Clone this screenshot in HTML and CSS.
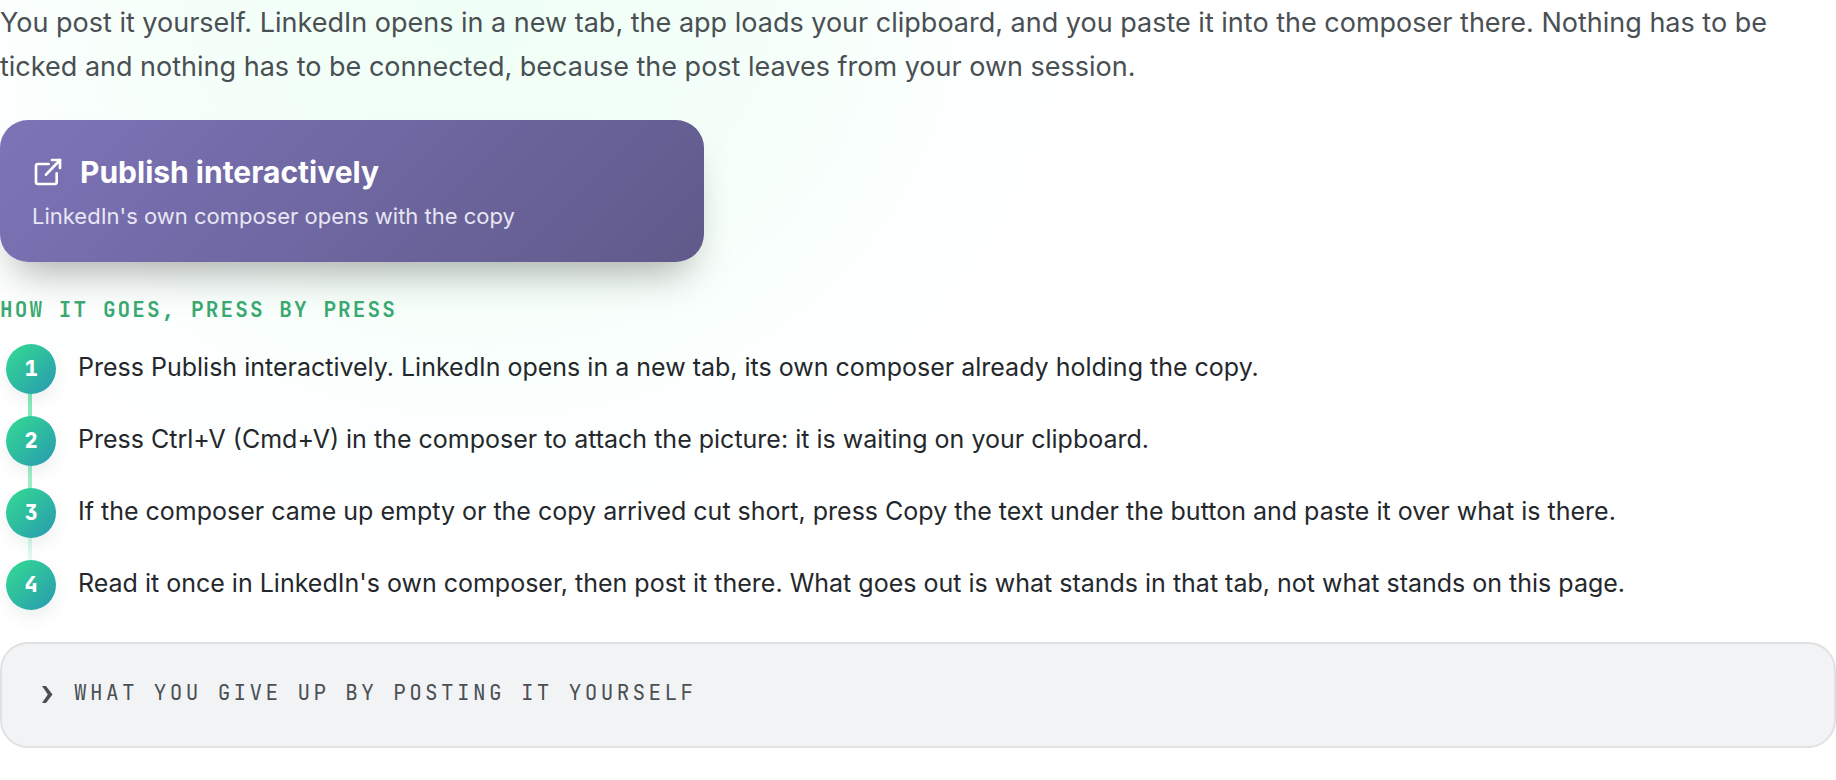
FILE: index.html
```html
<!DOCTYPE html>
<html lang="en">
<head>
<meta charset="utf-8">
<meta name="viewport" content="width=device-width, initial-scale=1">
<title>Publish interactively</title>
<link rel="stylesheet" href="styles.css">
</head>
<body>
<main class="panel">
  <p class="intro">You post it yourself. LinkedIn opens in a new tab, the app loads your clipboard, and you paste it into the composer there. Nothing has to be ticked and nothing has to be connected, because the post leaves from your own session.</p>

  <button class="publish" type="button">
    <span class="publish-title">
      <svg class="publish-icon" viewBox="0 0 24 24" fill="none" stroke="currentColor" stroke-width="2" stroke-linecap="round" stroke-linejoin="round" aria-hidden="true">
        <path d="M12.500 6H4.500a1.500 1.500 0 0 0-1.500 1.500v12a1.500 1.500 0 0 0 1.500 1.500h12.500a1.500 1.500 0 0 0 1.500-1.500V13"/>
        <path d="M15 3h6v6"/>
        <path d="M21 3 10.500 14"/>
      </svg>
      Publish interactively
    </span>
    <span class="publish-note">LinkedIn's own composer opens with the copy</span>
  </button>

  <h2 class="eyebrow">How it goes, press by press</h2>

  <ol class="steps">
    <li class="step"><span class="step-number">1</span><span>Press Publish interactively. LinkedIn opens in a new tab, its own composer already holding the copy.</span></li>
    <li class="step"><span class="step-number">2</span><span>Press Ctrl+V (Cmd+V) in the composer to attach the picture: it is waiting on your clipboard.</span></li>
    <li class="step"><span class="step-number">3</span><span>If the composer came up empty or the copy arrived cut short, press Copy the text under the button and paste it over what is there.</span></li>
    <li class="step"><span class="step-number">4</span><span>Read it once in LinkedIn's own composer, then post it there. What goes out is what stands in that tab, not what stands on this page.</span></li>
  </ol>

  <details class="tradeoffs">
    <summary class="tradeoffs-summary">
      <svg class="chevron" viewBox="0 0 12 22" fill="currentColor" aria-hidden="true"><path d="M0 4h4l6.500 8.500-6.500 8.500H0l5.800-8.500z"/></svg>
      What you give up by posting it yourself
    </summary>
    <p class="tradeoffs-text">The post is not scheduled or tracked by the app.</p>
  </details>
</main>
</body>
</html>
```
FILE: styles.css
```css
* {
  box-sizing: border-box;
}

body {
  margin: 0;
  min-height: 100vh;
  color: #24282c;
  background: radial-gradient(ellipse 640px 560px at 480px 0, #effff6 0%, #f4fff9 40%, #fbfffd 75%, #ffffff 100%) #ffffff;
  font-family: Inter, "Liberation Sans", sans-serif;
}

.intro {
  margin: 0;
  padding: 1px 0 31px;
  color: #4a4f54;
  font-size: 27px;
  line-height: 44px;
}

.publish {
  display: flex;
  flex-direction: column;
  gap: 4px;
  width: 704px;
  max-width: 100%;
  padding: 30px 32px 28px;
  border: 0;
  border-radius: 28px;
  color: #ffffff;
  background: linear-gradient(135deg, #7d74b8, #605a8a);
  box-shadow: 0 24px 40px -16px rgba(0, 0, 0, 0.35);
  font-family: inherit;
  text-align: left;
  cursor: pointer;
}

.publish-title {
  display: flex;
  align-items: center;
  gap: 16px;
  font-size: 30px;
  font-weight: 700;
  line-height: 44px;
}

.publish-icon {
  width: 32px;
  height: 32px;
}

.publish-note {
  color: #e8e6f4;
  font-size: 22px;
  line-height: 36px;
}

.eyebrow {
  margin: 0;
  padding: 31px 0 17px;
  color: #3aa870;
  font-family: "JetBrains Mono", "DejaVu Sans Mono", monospace;
  font-size: 21px;
  font-weight: 600;
  letter-spacing: 0.1em;
  line-height: 34px;
  text-transform: uppercase;
}

.steps {
  position: relative;
  display: flex;
  flex-direction: column;
  gap: 22px;
  margin: 0;
  padding: 0 0 32px 6px;
  list-style: none;
}

.steps::before {
  content: "";
  position: absolute;
  top: 24px;
  bottom: 60px;
  left: 28px;
  width: 4px;
  background: linear-gradient(#78e8b6, #a6efce 60%, rgba(166, 239, 206, 0));
}

.step {
  position: relative;
  display: flex;
  align-items: flex-start;
  gap: 22px;
  font-size: 25px;
  line-height: 46px;
}

.step-number {
  display: grid;
  flex: none;
  place-items: center;
  width: 50px;
  height: 50px;
  border-radius: 50%;
  color: #ffffff;
  background: linear-gradient(135deg, #34dc92, #2899b0);
  box-shadow: 0 8px 20px -4px rgba(20, 80, 60, 0.12);
  font-family: "JetBrains Mono", "DejaVu Sans Mono", monospace;
  font-size: 22px;
  font-weight: 800;
}

.tradeoffs {
  padding: 32px 40px 36px;
  border: 2px solid #dfe1e3;
  border-radius: 28px;
  color: #4a4f54;
  background: #f1f3f5;
}

.tradeoffs-summary {
  display: flex;
  align-items: center;
  gap: 20px;
  font-family: "JetBrains Mono", "DejaVu Sans Mono", monospace;
  font-size: 21px;
  letter-spacing: 0.16em;
  line-height: 34px;
  text-transform: uppercase;
  list-style: none;
  cursor: pointer;
}

.chevron {
  flex: none;
  width: 12px;
  height: 22px;
}

.tradeoffs[open] .chevron {
  transform: rotate(90deg);
}

.tradeoffs-text {
  margin: 16px 0 0;
  font-size: 25px;
  line-height: 40px;
}
```
